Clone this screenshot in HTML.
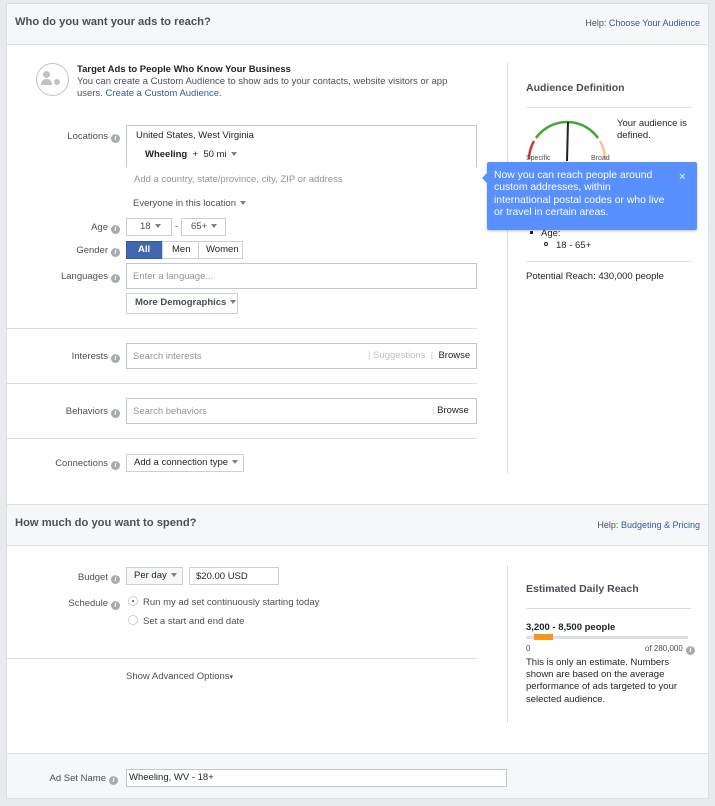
<!DOCTYPE html>
<html><head><meta charset="utf-8"><style>
*{box-sizing:border-box;margin:0;padding:0}
body{width:715px;height:806px;background:#e9eaed;font-family:"Liberation Sans",Arial,sans-serif;font-size:9.5px;color:#4b4f56;position:relative;overflow:hidden}
.a{position:absolute;white-space:nowrap}
.panel{position:absolute;left:6px;width:703px;background:#fff;border:1px solid #dddfe2}
.hdr{position:absolute;left:6px;width:703px;background:#f6f7f9;border:1px solid #dddfe2}
.t{font-size:11.2px;font-weight:bold;color:#4b4f56}
.help{font-size:9px;color:#4b4f56}
.help span{color:#365899}
.lbl{text-align:right;width:100px;color:#4b4f56}
.i{display:inline-block;width:9px;height:9px;border-radius:50%;background:#a7abb1;color:#fff;font-size:7px;line-height:9px;text-align:center;font-weight:bold;vertical-align:-1px;margin-left:3px;font-style:italic}
.box{position:absolute;border:1px solid #bdc7d8;background:#fff}
.btn{position:absolute;border:1px solid #ccd0d5;background:#f6f7f9;font-weight:bold;color:#4b4f56;line-height:16px;padding-left:7px}
.car{display:inline-block;width:0;height:0;border-left:3px solid transparent;border-right:3px solid transparent;border-top:4px solid #7f7f7f;vertical-align:1px;margin-left:4px}
.ph{color:#90949c}
.sep{position:absolute;height:1px;background:#dddfe2}
</style></head><body>
<!-- section 1 -->
<div class="panel" style="top:3px;height:502px"></div>
<div class="hdr" style="top:3px;height:42px"></div>
<div class="a t" style="left:15px;top:16px">Who do you want your ads to reach?</div>
<div class="a help" style="right:15px;top:18px">Help: <span>Choose Your Audience</span></div>

<div class="a" style="left:36px;top:63px;width:33px;height:33px;border:1.5px solid #bec2c9;border-radius:50%"></div>
<div class="a" style="left:43px;top:71px;width:7px;height:7px;border-radius:50%;background:#bec2c9"></div>
<div class="a" style="left:41px;top:79px;width:11px;height:6px;border-radius:5px 5px 0 0;background:#bec2c9"></div>
<div class="a" style="left:52px;top:77px;width:10px;height:10px;border-radius:50%;background:#bec2c9;border:2px solid #fff"></div>
<div class="a" style="left:77px;top:64px;font-weight:bold;color:#1d2129">Target Ads to People Who Know Your Business</div>
<div class="a" style="left:77px;top:76px;color:#4b4f56;white-space:normal;width:380px;line-height:12px">You can create a Custom Audience to show ads to your contacts, website visitors or app users. <span style="color:#365899">Create a Custom Audience.</span></div>

<div class="a lbl" style="left:20px;top:131px">Locations<span class="i">i</span></div>
<div class="box" style="left:126px;top:125px;width:351px;height:42px;border-bottom:none"></div>
<div class="a" style="left:136px;top:130px;color:#1d2129">United States, West Virginia</div>
<div class="a" style="left:145px;top:149px;color:#1d2129"><b>Wheeling</b> &nbsp;+&nbsp; 50 mi<span class="car"></span></div>
<div class="a ph" style="left:134px;top:174px">Add a country, state/province, city, ZIP or address</div>
<div class="a" style="left:133px;top:198px;color:#4b4f56">Everyone in this location<span class="car"></span></div>

<div class="a lbl" style="left:20px;top:222px">Age<span class="i">i</span></div>
<div class="btn" style="left:126px;top:218px;width:46px;height:18px;background:#fff;font-weight:normal;padding-left:13px">18<span class="car"></span></div>
<div class="a" style="left:175px;top:221px">-</div>
<div class="btn" style="left:181px;top:218px;width:45px;height:18px;background:#fff;font-weight:normal;padding-left:9px">65+<span class="car"></span></div>
<div class="a lbl" style="left:20px;top:245px">Gender<span class="i">i</span></div>
<div class="btn" style="left:126px;top:241px;width:37px;height:18px;background:#4267b2;border-color:#365899;color:#fff;padding-left:11px">All</div>
<div class="btn" style="left:162px;top:241px;width:37px;height:18px;background:#fff;font-weight:normal;padding-left:9px;color:#1d2129">Men</div>
<div class="btn" style="left:198px;top:241px;width:45px;height:18px;background:#fff;font-weight:normal;padding-left:7px;color:#1d2129">Women</div>
<div class="a lbl" style="left:20px;top:271px">Languages<span class="i">i</span></div>
<div class="box" style="left:126px;top:263px;width:351px;height:26px"></div>
<div class="a ph" style="left:133px;top:271px">Enter a language...</div>
<div class="btn" style="left:126px;top:293px;width:112px;height:21px;background:#fff;line-height:18px;padding-left:8px">More Demographics<span class="car"></span></div>

<div class="sep" style="left:6px;top:328px;width:471px"></div>
<div class="a lbl" style="left:20px;top:351px">Interests<span class="i">i</span></div>
<div class="box" style="left:126px;top:343px;width:351px;height:26px"></div>
<div class="a ph" style="left:133px;top:351px">Search interests</div>
<div class="a" style="left:368px;top:350px;color:#ccd0d5">| <span style="color:#bec2c9">Suggestions</span> &nbsp;|&nbsp; <span style="color:#1d2129">Browse</span></div>
<div class="sep" style="left:6px;top:383px;width:471px"></div>
<div class="a lbl" style="left:20px;top:406px">Behaviors<span class="i">i</span></div>
<div class="box" style="left:126px;top:398px;width:351px;height:26px"></div>
<div class="a ph" style="left:133px;top:406px">Search behaviors</div>
<div class="a" style="left:432px;top:405px;color:#ccd0d5">| <span style="color:#1d2129">Browse</span></div>
<div class="sep" style="left:6px;top:438px;width:471px"></div>
<div class="a lbl" style="left:20px;top:458px">Connections<span class="i">i</span></div>
<div class="btn" style="left:126px;top:454px;width:118px;height:18px;background:#fff;font-weight:normal;padding-left:7px;color:#1d2129">Add a connection type<span class="car"></span></div>

<!-- right column -->
<div class="a" style="left:507px;top:63px;width:1px;height:410px;background:#dddfe2"></div>
<div class="a" style="left:526px;top:82px;font-size:10.5px;font-weight:bold;color:#4b4f56">Audience Definition</div>
<div class="sep" style="left:526px;top:107px;width:166px"></div>
<svg class="a" style="left:520px;top:114px" width="95" height="50">
<path d="M9 45 A38 38 0 0 1 14 27" stroke="#d13a3a" stroke-width="2.5" fill="none"/>
<path d="M16 24 A38 38 0 0 1 78 24" stroke="#42a83a" stroke-width="2.5" fill="none"/>
<path d="M80 27 A38 38 0 0 1 85 45" stroke="#f5c68e" stroke-width="2.5" fill="none"/>
<line x1="48" y1="8" x2="47" y2="47" stroke="#1d2129" stroke-width="2"/>
</svg>
<div class="a" style="left:526px;top:155px;font-size:7px">Specific</div>
<div class="a" style="left:591px;top:155px;font-size:7px">Broad</div>
<div class="a" style="left:617px;top:118px;line-height:12px;color:#1d2129">Your audience is<br>defined.</div>
<div class="a" style="left:530px;top:231px;width:3px;height:3px;background:#1d2129"></div>
<div class="a" style="left:541px;top:228px;color:#1d2129">Age:</div>
<div class="a" style="left:544px;top:242px;width:4px;height:4px;border:1px solid #1d2129;border-radius:50%"></div>
<div class="a" style="left:556px;top:240px;color:#1d2129">18 - 65+</div>
<div class="sep" style="left:526px;top:261px;width:166px"></div>
<div class="a" style="left:526px;top:271px;color:#1d2129">Potential Reach: 430,000 people</div>

<!-- tooltip -->
<div class="a" style="left:487px;top:162px;width:210px;height:68px;background:#5890ff;border-radius:2px;box-shadow:0 1px 2px rgba(0,0,0,.25)"></div>
<div class="a" style="left:482px;top:173px;width:0;height:0;border-top:5px solid transparent;border-bottom:5px solid transparent;border-right:5px solid #5890ff"></div>
<div class="a" style="left:494px;top:170px;color:#fff;font-size:10.4px;line-height:12.3px">Now you can reach people around<br>custom addresses, within<br>international postal codes or who live<br>or travel in certain areas.</div>
<div class="a" style="left:679px;top:171px;color:#c9dcff;font-size:11px;font-weight:bold">×</div>

<!-- section 2 -->
<div class="panel" style="top:504px;height:295px"></div>
<div class="hdr" style="top:504px;height:42px"></div>
<div class="a t" style="left:15px;top:517px">How much do you want to spend?</div>
<div class="a help" style="right:15px;top:520px">Help: <span>Budgeting &amp; Pricing</span></div>

<div class="a lbl" style="left:20px;top:572px">Budget<span class="i">i</span></div>
<div class="btn" style="left:126px;top:567px;width:57px;height:18px;font-weight:normal;color:#1d2129">Per day<span class="car"></span></div>
<div class="box" style="left:189px;top:567px;width:90px;height:18px;border-color:#ccd0d5"></div>
<div class="a" style="left:196px;top:571px;color:#1d2129">$20.00 USD</div>
<div class="a lbl" style="left:20px;top:598px">Schedule<span class="i">i</span></div>
<div class="a" style="left:128px;top:596px;width:10px;height:10px;border:1px solid #ccd0d5;border-radius:50%"></div>
<div class="a" style="left:132px;top:600px;width:2px;height:2px;background:#4b4f56;border-radius:50%"></div>
<div class="a" style="left:143px;top:597px">Run my ad set continuously starting today</div>
<div class="a" style="left:128px;top:615px;width:10px;height:10px;border:1px solid #ccd0d5;border-radius:50%"></div>
<div class="a" style="left:143px;top:616px">Set a start and end date</div>
<div class="sep" style="left:6px;top:658px;width:471px"></div>
<div class="a" style="left:126px;top:671px;color:#4b4f56">Show Advanced Options<span style="font-size:7px">▾</span></div>

<div class="a" style="left:507px;top:565px;width:1px;height:158px;background:#dddfe2"></div>
<div class="a" style="left:526px;top:583px;font-size:10.5px;font-weight:bold;color:#4b4f56">Estimated Daily Reach</div>
<div class="sep" style="left:526px;top:608px;width:165px"></div>
<div class="a" style="left:526px;top:622px;font-weight:bold;color:#1d2129">3,200 - 8,500 people</div>
<div class="a" style="left:526px;top:636px;width:162px;height:3px;background:#dddfe2"></div>
<div class="a" style="left:534px;top:634px;width:19px;height:6px;background:#f7941d"></div>
<div class="a" style="left:526px;top:644px;font-size:8px">0</div>
<div class="a" style="left:645px;top:644px;font-size:8px">of 280,000<span class="i">i</span></div>
<div class="a" style="left:526px;top:657px;line-height:12.2px;color:#1d2129">This is only an estimate. Numbers<br>shown are based on the average<br>performance of ads targeted to your<br>selected audience.</div>

<!-- ad set name -->
<div class="a" style="left:7px;top:753px;width:701px;height:45px;background:#f6f7f9;border-top:1px solid #dddfe2"></div>
<div class="a lbl" style="left:18px;top:773px">Ad Set Name<span class="i">i</span></div>
<div class="box" style="left:126px;top:769px;width:381px;height:18px"></div>
<div class="a" style="left:129px;top:772px;color:#1d2129">Wheeling, WV - 18+</div>
</body></html>
